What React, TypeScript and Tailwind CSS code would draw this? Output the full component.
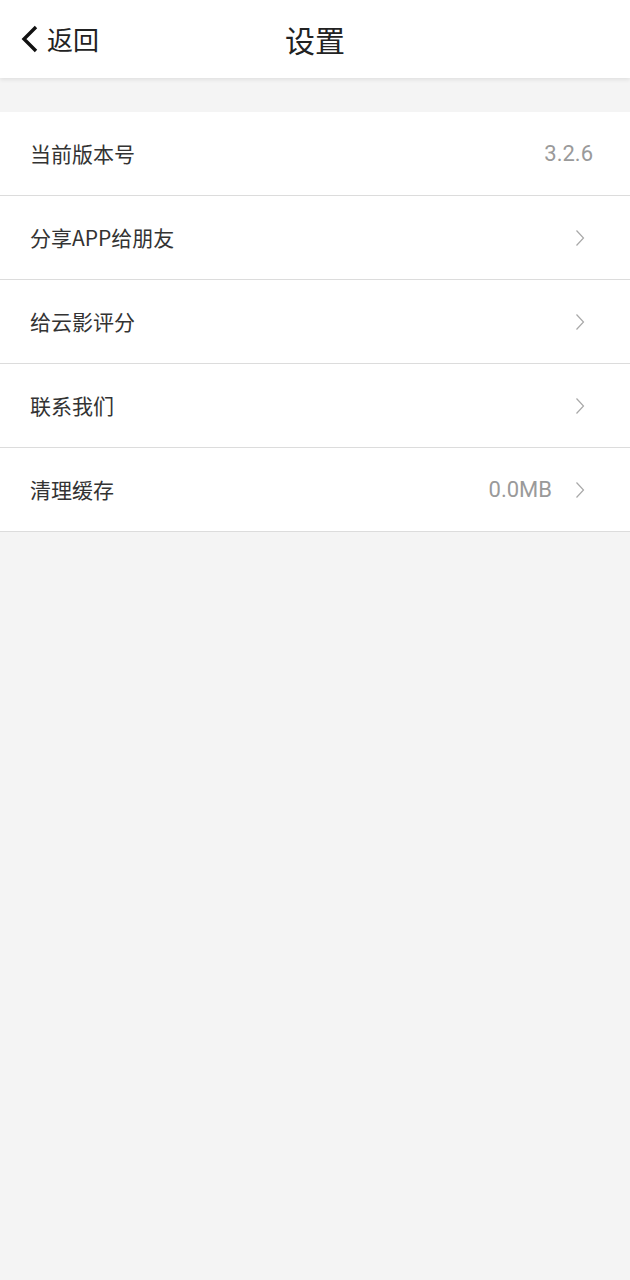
const font = { fontFamily: '"Noto Sans CJK SC", Roboto, sans-serif' }

type Row = { label: string; value?: string; arrow: boolean }

const rows: Row[] = [
  { label: '当前版本号', value: '3.2.6', arrow: false },
  { label: '分享APP给朋友', arrow: true },
  { label: '给云影评分', arrow: true },
  { label: '联系我们', arrow: true },
  { label: '清理缓存', value: '0.0MB', arrow: true },
]

function Chevron() {
  return (
    <svg width="10" height="18" viewBox="0 0 10 18" className="ml-[23px] mr-[8px]">
      <path d="M1.5 1.5 L8.5 9 L1.5 16.5" fill="none" stroke="#a8a8a8" strokeWidth="1.2" />
    </svg>
  )
}

export default function App() {
  return (
    <div className="min-h-[1280px] w-[630px] bg-[#f4f4f4]" style={font}>
      <header className="relative z-10 flex h-[78px] items-center justify-center bg-white shadow-[0_2px_4px_rgba(0,0,0,0.08)]">
        <button className="absolute left-[20px] top-0 flex h-[78px] items-center text-[#222]">
          <svg width="20" height="30" viewBox="0 0 20 30">
            <path d="M16 3 L4 15 L16 27" fill="none" stroke="#111" strokeWidth="3.4" />
          </svg>
          <span className="ml-[7px] text-[26px] leading-none">返回</span>
        </button>
        <h1 className="text-[30px] font-normal leading-none text-[#222]">设置</h1>
      </header>

      <div className="pt-[34px]">
        {rows.map((row) => (
          <div
            key={row.label}
            className="flex h-[84px] items-center border-b border-[#dcdcdc] bg-white pl-[30px] pr-[37px]"
          >
            <span className="flex-1 text-[21px] text-[#333]">{row.label}</span>
            {row.value && (
              <span className="text-[22px] text-[#9a9a9a]" style={{ fontFamily: 'Roboto, sans-serif' }}>
                {row.value}
              </span>
            )}
            {row.arrow && <Chevron />}
          </div>
        ))}
      </div>
    </div>
  )
}
